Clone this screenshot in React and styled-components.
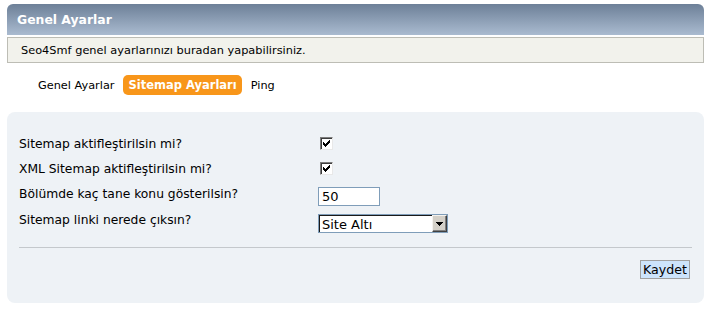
import React from "react";
import styled, { createGlobalStyle } from "styled-components";

const Global = createGlobalStyle`
  html, body { margin: 0; padding: 0; background: #ffffff; }
  body { font-family: "DejaVu Sans", Verdana, sans-serif; color: #000; }
`;

const Page = styled.div`
  padding: 4px 10px 0 7px;
`;

const TitleBar = styled.div`
  height: 31px;
  box-sizing: border-box;
  border-radius: 6px 6px 0 0;
  background: linear-gradient(#6d8098, #aabbd0);
  display: flex;
  align-items: center;
  padding-left: 10px;
  color: #fff;
  font-weight: bold;
  font-size: 12.4px;
`;

const Description = styled.div`
  margin-top: 2px;
  height: 26px;
  box-sizing: border-box;
  border: 1px solid #bdbdb5;
  background: #f2f2ec;
  display: flex;
  align-items: center;
  padding-left: 13px;
  font-size: 11.35px;
`;

const Tabs = styled.div`
  margin-top: 12px;
  height: 20px;
  display: flex;
  align-items: center;
  gap: 9px;
  padding-left: 31px;
  font-size: 11.3px;
`;

const Tab = styled.span`
  display: inline-flex;
  align-items: center;
  height: 20px;
  ${(p) =>
    p.$active
      ? `
    background: #f8961a;
    color: #fff;
    font-weight: bold;
    border-radius: 5px;
    padding: 0 5px;
    font-size: 11.5px;
  `
      : `
    color: #000;
  `}
`;

const Panel = styled.div`
  margin-top: 17px;
  background: #eef2f6;
  border-radius: 8px;
  padding: 19px 12px 24px 12px;
`;

const Row = styled.div`
  display: grid;
  grid-template-columns: 299px 1fr;
  height: 25px;
  align-items: center;
`;

const Label = styled.span`
  font-size: 12.3px;
`;

const Control = styled.div`
  display: flex;
  align-items: center;
  margin-top: ${(p) => p.$shift || 0}px;
`;

const CheckBox = styled.span`
  width: 13px;
  height: 13px;
  box-sizing: border-box;
  margin-left: 2px;
  border: 1px solid;
  border-color: #7c7c7c #e8e8e8 #e8e8e8 #7c7c7c;
  box-shadow: inset 1px 1px 0 #3c3c3c;
  background: #fff;
  display: flex;
  align-items: center;
  justify-content: center;
`;

const TextInput = styled.div`
  width: 62px;
  height: 19px;
  box-sizing: border-box;
  border: 1px solid #7f9db9;
  background: #fff;
  padding-left: 3px;
  font-size: 13px;
  display: flex;
  align-items: center;
`;

const SelectBox = styled.div`
  width: 130px;
  height: 19px;
  box-sizing: border-box;
  border: 1px solid #7f9db9;
  background: #fff;
  display: flex;
`;

const SelectValue = styled.div`
  flex: 1;
  border-top: 1px solid #1a1a1a;
  border-left: 1px solid #1a1a1a;
  padding-left: 2px;
  font-size: 13px;
  display: flex;
  align-items: center;
`;

const SelectButton = styled.div`
  width: 15px;
  box-sizing: border-box;
  background: #d4d0c8;
  border: 1px solid;
  border-color: #f4f2ee #404040 #404040 #f4f2ee;
  box-shadow: inset -1px -1px 0 #808080;
  display: flex;
  align-items: center;
  justify-content: center;
`;

const Divider = styled.hr`
  margin: 16px 0 0 0;
  border: 0;
  height: 1px;
  background: #c4c8cc;
`;

const Footer = styled.div`
  margin-top: 12px;
  display: flex;
  justify-content: flex-end;
  padding-right: 2px;
`;

const SaveButton = styled.button`
  height: 19px;
  width: 50px;
  box-sizing: border-box;
  padding: 0;
  border: 1px solid #a0a0a0;
  background: #cde4fb;
  font-family: "DejaVu Sans", Verdana, sans-serif;
  font-size: 12.6px;
  color: #000;
  display: flex;
  align-items: center;
  justify-content: center;
`;

const checkPixels = [
  [6, 0, 1],
  [5, 1, 2],
  [0, 2, 1],
  [4, 2, 3],
  [0, 3, 2],
  [3, 3, 3],
  [0, 4, 5],
  [1, 5, 3],
  [2, 6, 1],
];

const Check = () => (
  <svg width="7" height="7" viewBox="0 0 7 7" shapeRendering="crispEdges">
    {checkPixels.map(([x, y, w], i) => (
      <rect key={i} x={x} y={y} width={w} height={1} fill="#000" />
    ))}
  </svg>
);

const Arrow = () => (
  <svg width="7" height="4" viewBox="0 0 7 4" shapeRendering="crispEdges">
    <path d="M0 0h7v1h-1v1h-1v1h-1v1h-1v-1h-1v-1h-1v-1h-1z" fill="#000" />
  </svg>
);

export default function App() {
  return (
    <>
      <Global />
      <Page>
        <TitleBar>Genel Ayarlar</TitleBar>
        <Description>Seo4Smf genel ayarlarınızı buradan yapabilirsiniz.</Description>
        <Tabs>
          <Tab>Genel Ayarlar</Tab>
          <Tab $active>Sitemap Ayarları</Tab>
          <Tab>Ping</Tab>
        </Tabs>
        <Panel>
          <Row>
            <Label>Sitemap aktifleştirilsin mi?</Label>
            <Control>
              <CheckBox>
                <Check />
              </CheckBox>
            </Control>
          </Row>
          <Row>
            <Label>XML Sitemap aktifleştirilsin mi?</Label>
            <Control>
              <CheckBox>
                <Check />
              </CheckBox>
            </Control>
          </Row>
          <Row>
            <Label>Bölümde kaç tane konu gösterilsin?</Label>
            <Control $shift={6}>
              <TextInput>50</TextInput>
            </Control>
          </Row>
          <Row>
            <Label>Sitemap linki nerede çıksın?</Label>
            <Control $shift={8}>
              <SelectBox>
                <SelectValue>Site Altı</SelectValue>
                <SelectButton>
                  <Arrow />
                </SelectButton>
              </SelectBox>
            </Control>
          </Row>
          <Divider />
          <Footer>
            <SaveButton>Kaydet</SaveButton>
          </Footer>
        </Panel>
      </Page>
    </>
  );
}
